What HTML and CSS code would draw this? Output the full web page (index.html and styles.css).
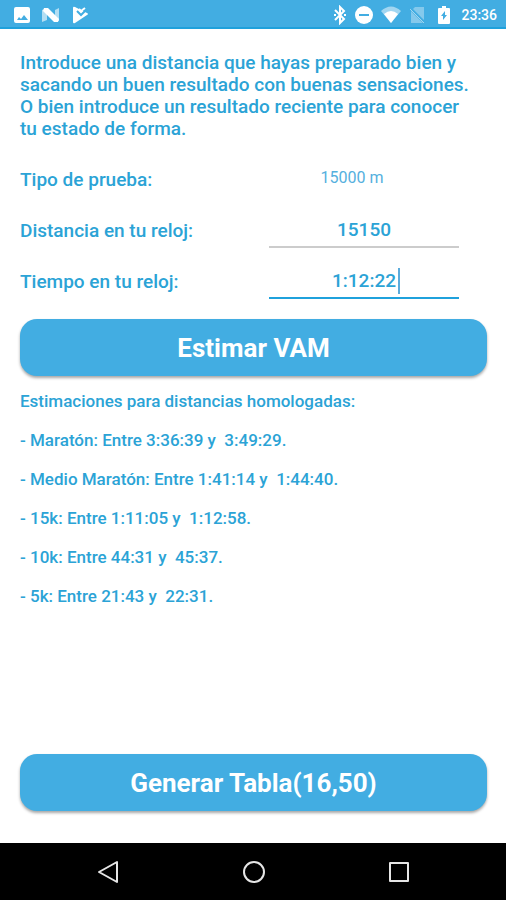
FILE: index.html
```html
<!DOCTYPE html>
<html lang="es">
<head>
<meta charset="utf-8">
<meta name="viewport" content="width=device-width, initial-scale=1">
<title>Estimar VAM</title>
<link rel="stylesheet" href="styles.css">
</head>
<body>
<header class="status">
  <div class="status-group status-left">
    <svg width="18" height="18" viewBox="0 0 18 18" aria-hidden="true"><path fill="#fff" fill-rule="evenodd" d="M3 1h12q2 0 2 2v12q0 2-2 2H3q-2 0-2-2V3q0-2 2-2zM4 14h11l-4-5-3 4-2-2z"/></svg>
    <svg width="20" height="18" viewBox="0 0 20 18" aria-hidden="true"><path fill="#fff" opacity=".6" d="M1 4l5-2v12l-5 2zM14 4l4-2v13h-4z"/><path fill="#fff" d="M3 2h4l11 11-1 3h-4L2 5z"/></svg>
    <svg width="18" height="18" viewBox="0 0 18 18" aria-hidden="true"><path fill="#fff" d="M2 2q0-2 2-1l12 6q2 1 0 2L4 17q-2 1-2-1z"/><path fill="none" stroke="#42ade2" stroke-width="2" d="M6 5l4 4 6-6"/><path fill="none" stroke="#fff" stroke-width="2" d="M8 3l2 2 4-3"/></svg>
  </div>
  <div class="status-group status-right">
    <svg width="14" height="20" viewBox="0 0 14 20" aria-hidden="true"><path fill="none" stroke="#fff" stroke-width="2" d="M2 5l9 9-4 4V2l4 4-9 9"/><path fill="#fff" d="M1 9h2v2H1zM11 9h2v2h-2z"/></svg>
    <svg width="18" height="18" viewBox="0 0 18 18" aria-hidden="true"><circle cx="9" cy="9" r="9" fill="#fff"/><path fill="#42ade2" d="M4 8h10v2H4z"/></svg>
    <svg width="20" height="18" viewBox="0 0 20 18" aria-hidden="true"><path fill="#fff" opacity=".5" d="M0 5q10-9 20 0L10 17z"/><path fill="#fff" d="M3 8q7-6 14 0l-7 9z"/></svg>
    <svg width="16" height="18" viewBox="0 0 16 18" aria-hidden="true"><path fill="#fff" opacity=".35" d="M6 1h9v13L4 3zM2 5l12 12H2z"/><path stroke="#fff" opacity=".5" stroke-width="1" d="M1 3l14 14"/></svg>
    <svg class="battery" width="12" height="18" viewBox="0 0 12 18" aria-hidden="true"><path fill="#fff" d="M4 0h4v2h3q1 0 1 1v14q0 1-1 1H1q-1 0-1-1V3q0-1 1-1h3z"/><path fill="#42ade2" d="M7 5l-4 5h2v4l4-5H7z"/></svg>
    <time>23:36</time>
  </div>
</header>
<main class="screen">
  <p class="intro">Introduce una distancia que hayas preparado bien y sacando un buen resultado con buenas sensaciones. O bien introduce un resultado reciente para conocer tu estado de forma.</p>
  <form class="form">
    <div class="row">
      <label for="tipo">Tipo de prueba:</label>
      <select id="tipo" class="type"><option>15000 m</option></select>
    </div>
    <div class="row">
      <label for="distancia">Distancia en tu reloj:</label>
      <div class="field"><input id="distancia" type="text" value="15150"></div>
    </div>
    <div class="row">
      <label for="tiempo">Tiempo en tu reloj:</label>
      <div class="field field-active"><input id="tiempo" type="text" value="1:12:22"><span class="caret"></span></div>
    </div>
    <button class="action" type="button">Estimar VAM</button>
  </form>
  <section class="results">
    <p>Estimaciones para distancias homologadas:</p>
    <p>- Maratón: Entre 3:36:39 y  3:49:29.</p>
    <p>- Medio Maratón: Entre 1:41:14 y  1:44:40.</p>
    <p>- 15k: Entre 1:11:05 y  1:12:58.</p>
    <p>- 10k: Entre 44:31 y  45:37.</p>
    <p>- 5k: Entre 21:43 y  22:31.</p>
  </section>
  <button class="action" type="button">Generar Tabla(16,50)</button>
</main>
<nav class="navbar">
  <button type="button" aria-label="Atrás"><svg width="24" height="24" viewBox="0 0 24 24"><path d="M20 2v20L2 12z"/></svg></button>
  <button type="button" aria-label="Inicio"><svg width="24" height="24" viewBox="0 0 24 24"><circle cx="12" cy="12" r="10"/></svg></button>
  <button type="button" aria-label="Recientes"><svg width="24" height="24" viewBox="0 0 24 24"><rect x="3" y="3" width="18" height="18"/></svg></button>
</nav>
</body>
</html>
```
FILE: styles.css
```css
* {
  box-sizing: border-box;
}

body {
  margin: 0;
  min-height: 100vh;
  display: flex;
  flex-direction: column;
  background: #fff;
  color: #2ba3d6;
  font-family: Roboto, "Liberation Sans", sans-serif;
  font-weight: 500;
}

button,
input,
select {
  margin: 0;
  padding: 0;
  border: 0;
  background: none;
  color: inherit;
  font: inherit;
}

.status {
  height: 29px;
  padding: 3px 9px 0 13px;
  display: flex;
  align-items: center;
  justify-content: space-between;
  background: #42ade2;
  border-bottom: 2px solid #1fa1dc;
  color: #fff;
  font-size: 14px;
}

.status-group {
  display: flex;
  align-items: center;
}

.status-left {
  gap: 10px;
}

.status-right {
  gap: 8px;
}

.battery {
  margin: 0 3px 0 5px;
}

.screen {
  flex: 1;
  display: flex;
  flex-direction: column;
  padding: 23px 19px 32px 20px;
}

.intro {
  margin: 0 0 14px;
  padding-right: 8px;
  font-size: 19px;
  line-height: 22px;
}

.row {
  height: 51px;
  padding-right: 28px;
  display: grid;
  grid-template-columns: 1fr 190px;
  align-items: center;
  font-size: 19px;
}

.type {
  appearance: none;
  height: 30px;
  margin-bottom: 4px;
  padding-right: 24px;
  font-size: 16px;
  font-weight: 400;
  color: #55b0de;
  text-align: center;
  text-align-last: center;
}

.field {
  position: relative;
  height: 34px;
  border-bottom: 2px solid #ccc;
}

.field input {
  width: 100%;
  height: 32px;
  outline: 0;
  text-align: center;
}

.field-active {
  border-color: #1fa1dc;
}

.caret {
  position: absolute;
  top: 3px;
  left: calc(50% + 34px);
  width: 2px;
  height: 26px;
  background: #5aabdc;
}

.action {
  width: 100%;
  height: 57px;
  border-radius: 17px;
  background: #42ade2;
  box-shadow: 0 2px 3px rgb(0 0 0 / 35%);
  color: #fff;
  font-size: 26px;
  font-weight: 700;
}

.form .action {
  margin-top: 12px;
}

.results {
  flex: 1;
  padding-top: 15px;
  display: flex;
  flex-direction: column;
  gap: 19px;
  font-size: 17px;
  line-height: 20px;
}

.results p {
  margin: 0;
  white-space: pre-wrap;
}

.navbar {
  height: 57px;
  padding: 0 35px 0 36px;
  display: flex;
  align-items: center;
  background: #000;
}

.navbar button {
  flex: 1;
  height: 48px;
  display: flex;
  align-items: center;
  justify-content: center;
}

.navbar svg {
  fill: none;
  stroke: #e6e6e6;
  stroke-width: 2;
  stroke-linejoin: round;
}
```
